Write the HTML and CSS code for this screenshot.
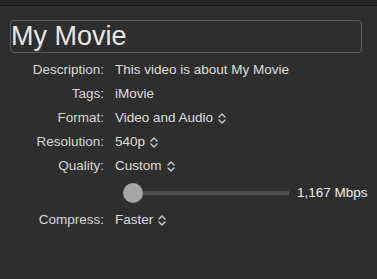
FILE: index.html
```html
<!DOCTYPE html>
<html lang="en">
<head>
    <meta charset="UTF-8">
    <title>Share Movie</title>
    <link rel="stylesheet" href="styles.css">
</head>
<body>
    <div class="toolbar"></div>
    <div class="panel">
        <div class="title-field">My Movie</div>
        <div class="form">
            <div class="label">Description:</div>
            <div class="value">This video is about My Movie</div>

            <div class="label">Tags:</div>
            <div class="value">iMovie</div>

            <div class="label">Format:</div>
            <div class="value">Video and Audio
                <svg class="updown" width="8" height="11" viewBox="0 0 8 11"><path d="M1 4 L4 1 L7 4 M1 7 L4 10 L7 7" /></svg>
            </div>

            <div class="label">Resolution:</div>
            <div class="value">540p
                <svg class="updown" width="8" height="11" viewBox="0 0 8 11"><path d="M1 4 L4 1 L7 4 M1 7 L4 10 L7 7" /></svg>
            </div>

            <div class="label">Quality:</div>
            <div class="value">Custom
                <svg class="updown" width="8" height="11" viewBox="0 0 8 11"><path d="M1 4 L4 1 L7 4 M1 7 L4 10 L7 7" /></svg>
            </div>

            <div class="label"></div>
            <div class="value slider-row">
                <div class="slider">
                    <div class="thumb"></div>
                    <div class="track"></div>
                </div>
                <span class="rate">1,167 Mbps</span>
            </div>

            <div class="label">Compress:</div>
            <div class="value">Faster
                <svg class="updown" width="8" height="11" viewBox="0 0 8 11"><path d="M1 4 L4 1 L7 4 M1 7 L4 10 L7 7" /></svg>
            </div>
        </div>
    </div>
</body>
</html>
```

FILE: styles.css
```css
body {
    margin: 0;
    background-color: #2e2e2e;
    font-family: "Liberation Sans", Arial, sans-serif;
    color: #dedede;
    font-size: 13.5px;
}
.toolbar {
    height: 5px;
    background-color: #262626;
    border-bottom: 1px solid #151515;
}
.panel {
    padding: 14px 15px 0 10px;
}
.title-field {
    height: 31px;
    border: 1px solid #5c5c5c;
    border-radius: 4px;
    font-size: 27px;
    line-height: 31px;
    color: #e8e8e8;
}
.form {
    display: grid;
    grid-template-columns: 94px 1fr;
    grid-template-rows: 24px 24px 24px 24px 24px 30px 24px;
    column-gap: 11px;
    margin-top: 5px;
    line-height: 24px;
}
.label {
    text-align: right;
    color: #d8d8d8;
}
.value {
    display: flex;
    align-items: center;
    gap: 5px;
    white-space: nowrap;
}
.updown {
    fill: none;
    stroke: #cfcfcf;
    stroke-width: 1.4;
    stroke-linecap: round;
    stroke-linejoin: round;
}
.value.slider-row {
    gap: 8px;
    padding-left: 8px;
}
.slider {
    display: flex;
    align-items: center;
    width: 166px;
}
.thumb {
    width: 20px;
    height: 20px;
    border-radius: 50%;
    background-color: #a6a6a6;
}
.track {
    flex: 1;
    height: 4px;
    background-color: #4e4e4e;
}
.rate {
    color: #efefef;
}
```
